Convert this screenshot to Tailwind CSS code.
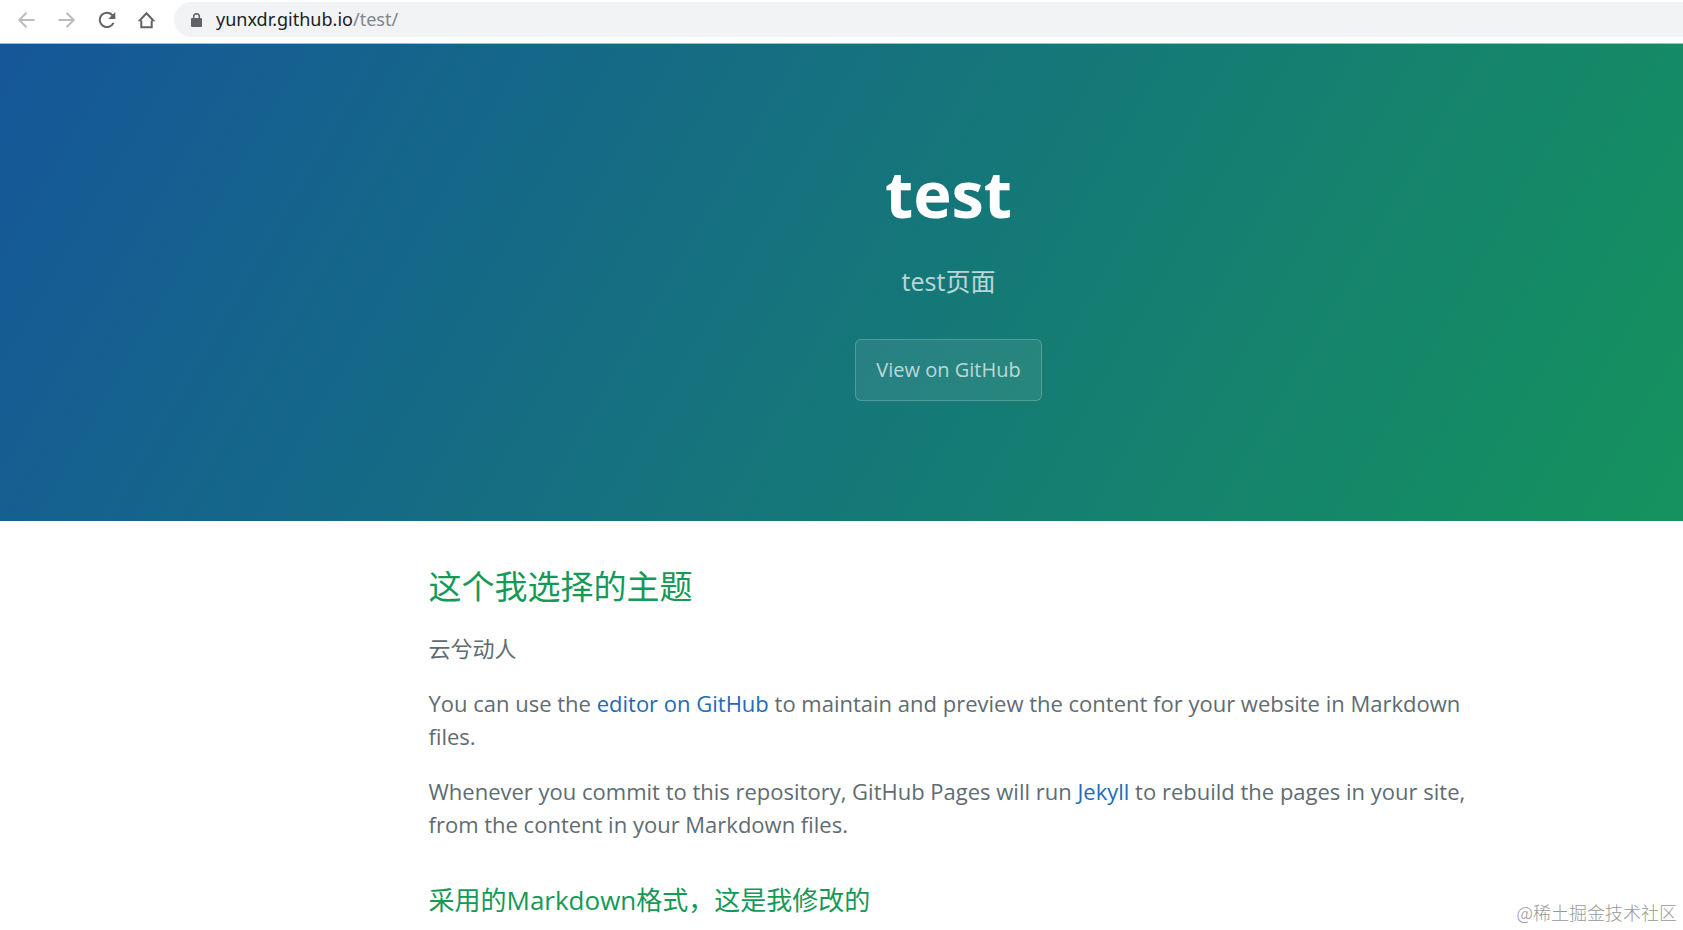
<!DOCTYPE html>
<html lang="zh-CN">
<head>
<meta charset="utf-8">
<title>test</title>
<script src="https://cdn.jsdelivr.net/npm/@tailwindcss/browser@4"></script>
</head>
<body class="relative h-screen overflow-hidden bg-white font-['Open_Sans','Noto_Sans_CJK_SC',sans-serif]">
<nav aria-label="Browser toolbar" class="flex h-[44px] items-start border-b border-[#b5b8bb] bg-white pt-[2px] pl-[15px]">
  <div class="flex h-[35px] items-center gap-4">
    <button type="button" aria-label="Back" class="size-6 text-[#babcbe]"><svg viewBox="0 0 24 24" class="size-6" fill="none" stroke="currentColor" stroke-width="2"><path d="M19.500 12H5M11.500 4.800L4.300 12L11.500 19.200"/></svg></button>
    <button type="button" aria-label="Forward" class="size-6 text-[#babcbe]"><svg viewBox="0 0 24 24" class="size-6" fill="none" stroke="currentColor" stroke-width="2"><path d="M3.500 12H18M11.500 4.800L18.700 12L11.500 19.200"/></svg></button>
    <button type="button" aria-label="Reload" class="size-6 text-[#5f6368]"><svg viewBox="0 0 24 24" class="size-6"><path d="M17.600 7.400A7.200 7.200 0 1 0 18.500 14.800" fill="none" stroke="currentColor" stroke-width="2"/><path d="M20.300 4V11H13.300z" fill="currentColor"/></svg></button>
    <button type="button" aria-label="Home" class="size-6 text-[#5f6368]"><svg viewBox="0 0 24 24" class="size-6" fill="none" stroke="currentColor" stroke-width="2"><path d="M6.300 12.500V19.300H16.700V12.500M6.300 12.300H4.900L11.500 5.200L18.100 12.300H16.700"/></svg></button>
  </div>
  <div class="ml-[15px] flex h-[35px] flex-1 items-center rounded-l-full bg-[#f1f3f4] pl-4">
    <svg viewBox="0 0 14 16" class="h-4 w-[14px] text-[#5f6368]" aria-hidden="true"><rect x="1" y="6" width="11" height="9" rx="1" fill="currentColor"/><path d="M3.700 7V4.500a2.800 2.800 0 0 1 5.600 0V7" fill="none" stroke="currentColor" stroke-width="1.500"/></svg>
    <span class="ml-3 pb-[2px] font-['Noto_Sans',sans-serif] text-[18px] leading-6 text-[#202124]">yunxdr.github.io<span class="text-[#80868b]">/test/</span></span>
  </div>
</nav>
<div class="min-w-[1897px]">
  <header class="bg-[linear-gradient(120deg,#155799,#159957)] px-[120px] pt-[100px] pb-[120px] text-center text-white">
    <h1 class="mb-5 text-[65px] leading-[98px] font-bold">test</h1>
    <p class="mb-[39px] text-[25px] leading-[38px] opacity-70">test页面</p>
    <a href="#" class="mx-auto block w-fit rounded-md border border-white/20 bg-white/8 px-5 py-[15px] text-[20px] leading-[30px] text-white/70">View on GitHub</a>
  </header>
  <main class="mx-auto max-w-[1280px] px-[120px] py-10 text-[22px] leading-[33px] text-[#606c71]">
    <h2 class="mb-[19px] text-[33px] leading-[52px] text-[#159957]">这个我选择的主题</h2>
    <p class="mb-[22px]">云兮动人</p>
    <p class="mb-[22px]">You can use the <a href="#" class="text-[#1e6bb8]">editor on GitHub</a> to maintain and preview the content for your website in Markdown files.</p>
    <p class="mb-10">Whenever you commit to this repository, GitHub Pages will run <a href="#" class="text-[#1e6bb8]">Jekyll</a> to rebuild the pages in your site, from the content in your Markdown files.</p>
    <h3 class="text-[26px] leading-[39px] text-[#159957]">采用的Markdown格式，这是我修改的</h3>
  </main>
</div>
<div class="absolute right-[6px] bottom-[6px] font-['Noto_Sans_CJK_SC',sans-serif] text-[18px] leading-6 font-light text-[#999999]">@稀土掘金技术社区</div>
</body>
</html>
